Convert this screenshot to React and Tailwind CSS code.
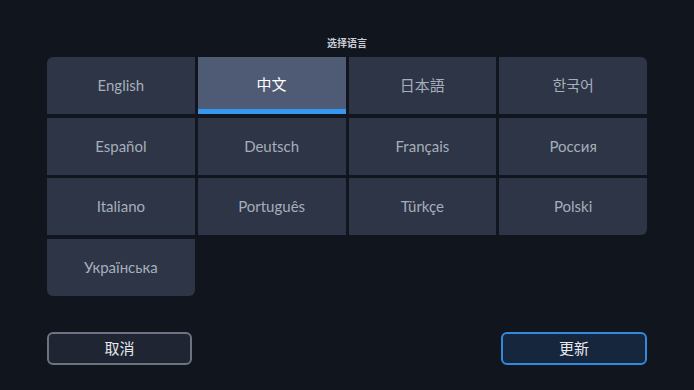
const languages = [
  'English', '中文', '日本語', '한국어',
  'Español', 'Deutsch', 'Français', 'Россия',
  'Italiano', 'Português', 'Türkçe', 'Polski',
  'Українська',
];

// corner rounding for the outer edge of the grid
const corners = {
  0: 'rounded-tl-[6px]',
  3: 'rounded-tr-[6px]',
  11: 'rounded-br-[6px]',
  12: 'rounded-b-[6px]',
};

export default function App() {
  const selected = '中文';

  return (
    <div
      className="w-[694px] h-[390px] bg-[#10151e] flex flex-col items-center"
      style={{ fontFamily: 'Lato, "Noto Sans CJK SC", "Noto Sans", sans-serif' }}
    >
      <div className="mt-[36px] h-[14px] text-[10px] leading-[14px] font-bold text-[#c9cdd3]">
        选择语言
      </div>

      <div className="mt-[7px] w-[600px] grid grid-cols-4 gap-x-[3px] gap-y-[3.5px]">
        {languages.map((lang, i) => {
          const active = lang === selected;
          return (
            <div
              key={lang}
              className={`relative h-[57px] flex items-center justify-center text-[15px] ${
                corners[i] || ''
              } ${active ? 'bg-[#4f5b74] text-white' : 'bg-[#2d3546] text-[#a6aebb]'}`}
            >
              <span className={active ? 'pb-[2px]' : ''}>{lang}</span>
              {active && (
                <div className="absolute left-0 right-0 bottom-0 h-[5px] bg-[#3398ef]" />
              )}
            </div>
          );
        })}
      </div>

      <div className="mt-auto mb-[25px] w-[600px] flex justify-between">
        <button className="w-[145px] h-[33px] rounded-[6px] border-2 border-[#6c7482] bg-[#1f2533] text-[15px] text-[#e6e8eb]">
          取消
        </button>
        <button className="w-[146px] h-[33px] rounded-[6px] border-2 border-[#2f8ae0] bg-[#15263d] text-[15px] text-[#e6e8eb]">
          更新
        </button>
      </div>
    </div>
  );
}
